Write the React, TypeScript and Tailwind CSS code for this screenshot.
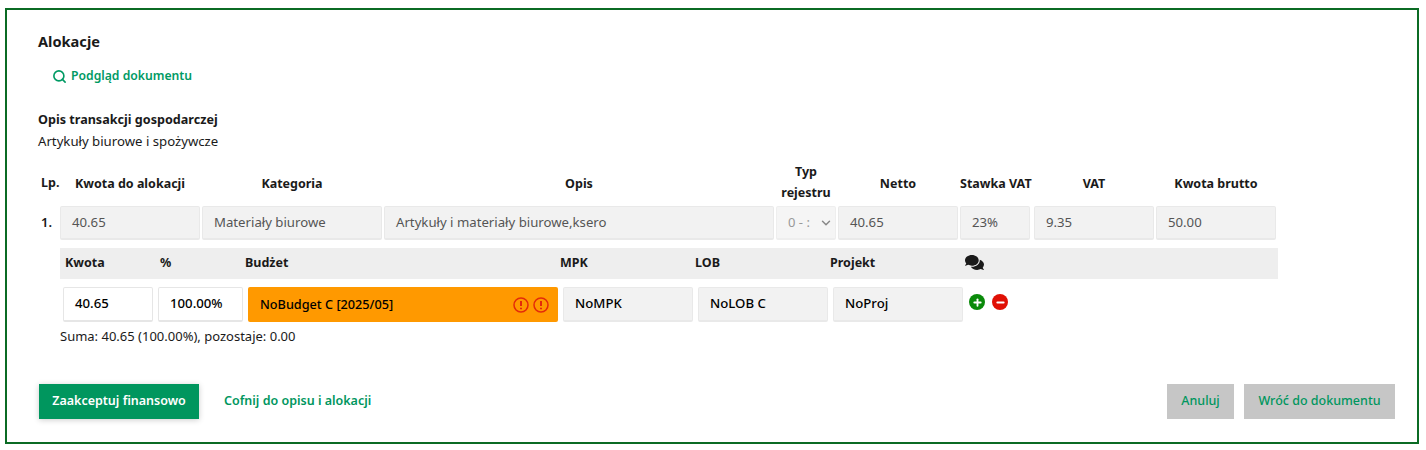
import { Search, ChevronDown, Plus, Minus } from 'lucide-react'
import { FaComments } from 'react-icons/fa'

const FONT = "font-['Noto_Sans',sans-serif]"

const headers = [
  { label: 'Kwota do alokacji', width: 'w-[140px] whitespace-nowrap' },
  { label: 'Kategoria', width: 'w-[180px]' },
  { label: 'Opis', width: 'w-[390px]' },
  { label: 'Typ rejestru', width: 'w-[60px] mb-[2px]' },
  { label: 'Netto', width: 'w-[120px]' },
  { label: 'Stawka VAT', width: 'w-[70px] whitespace-nowrap' },
  { label: 'VAT', width: 'w-[120px] ml-[2px]' },
  { label: 'Kwota brutto', width: 'w-[120px] whitespace-nowrap' },
]

function Field({ value, width, dark }: { value: string; width: string; dark?: boolean }) {
  return (
    <div
      className={`${width} h-[34px] shrink-0 flex items-center pl-[11px] bg-[#f2f2f2] border border-[#e9e9e9] border-b-2 rounded-[2px] text-[13.2px] ${
        dark ? 'text-black font-medium h-[35px]' : 'text-[#555555]'
      }`}
    >
      {value}
    </div>
  )
}

export default function App() {
  return (
    <div className={`${FONT} pt-2 pl-[5px] bg-white h-[450px] w-[1426px]`}>
      <div className="w-[1414px] h-[436px] border-2 border-[#0b6b24] pl-[31px] pr-[22px] text-[#1a1a1a] flex flex-col">
        {/* Title */}
        <h2 className="mt-[21px] h-5 leading-5 text-[14.6px] font-bold">Alokacje</h2>

        <a className="mt-[15px] ml-[14px] h-5 flex items-center gap-[4px] text-[12.2px] font-semibold text-[#009a64]">
          <Search size={15} strokeWidth={2.6} />
          Podgląd dokumentu
        </a>

        <div className="mt-[23px] h-[21px] leading-[22px] text-[12.6px] font-bold">Opis transakcji gospodarczej</div>
        <div className="h-[22px] leading-[22px] text-[13.2px]">Artykuły biurowe i spożywcze</div>

        {/* Main row headers */}
        <div className="mt-[9px] flex items-center h-[44px] text-[12.5px] font-bold">
          <div className="w-[22px] pl-[3px]">Lp.</div>
          <div className="flex gap-[2px] items-center">
            {headers.map((h) => (
              <div key={h.label} className={`${h.width} text-center leading-[21px] shrink-0`}>
                {h.label}
              </div>
            ))}
          </div>
        </div>

        {/* Main row */}
        <div className="mt-[1px] flex items-center">
          <div className="w-[22px] pl-[3px] text-[13px] font-semibold">1.</div>
          <div className="flex gap-[2px]">
            <Field value="40.65" width="w-[140px]" />
            <Field value="Materiały biurowe" width="w-[180px]" />
            <Field value="Artykuły i materiały biurowe,ksero" width="w-[390px]" />
            <div className="w-[60px] h-[34px] flex items-center justify-between pl-[11px] pr-[2px] bg-[#f5f5f5] border border-[#eeeeee] border-b-2 rounded-[2px] text-[13px] text-[#999999]">
              <span>0 - :</span>
              <ChevronDown size={14} strokeWidth={2.5} className="text-[#888888]" />
            </div>
            <Field value="40.65" width="w-[120px]" />
            <Field value="23%" width="w-[70px]" />
            <Field value="9.35" width="w-[120px] ml-[2px]" />
            <Field value="50.00" width="w-[120px]" />
          </div>
        </div>

        {/* Allocation headers */}
        <div className="mt-[8px] ml-[22px] w-[1218px] h-[31px] bg-[#eeeeee] flex items-center text-[12.5px] font-bold">
          <div className="w-[100px] pl-[5px]">Kwota</div>
          <div className="w-[85px]">%</div>
          <div className="w-[315px]">Budżet</div>
          <div className="w-[135px]">MPK</div>
          <div className="w-[135px]">LOB</div>
          <div className="w-[135px]">Projekt</div>
          <FaComments size={19} className="mb-[2px]" />
        </div>

        {/* Allocation row */}
        <div className="mt-[8px] ml-[25px] flex gap-[5px] items-start">
          <div className="w-[90px] h-[35px] flex items-center pl-[11px] bg-white border border-[#e6e6e6] border-b-2 rounded-[2px] text-[13.2px] font-medium text-black">
            40.65
          </div>
          <div className="w-[85px] h-[35px] flex items-center pl-[11px] bg-white border border-[#e6e6e6] border-b-2 rounded-[2px] text-[13.2px] font-medium text-black">
            100.00%
          </div>
          <div className="w-[310px] h-[35px] flex items-center justify-between pl-[12px] pr-[9px] bg-[#ff9900] rounded-[2px] text-[12.7px] font-medium text-black">
            <span>NoBudget C [2025/05]</span>
            <span className="flex gap-[4px]">
              <Warning />
              <Warning />
            </span>
          </div>
          <Field value="NoMPK" width="w-[130px]" dark />
          <Field value="NoLOB C" width="w-[130px]" dark />
          <Field value="NoProj" width="w-[130px]" dark />
          <div className="flex gap-[7px] pt-[7px] pl-[1px]">
            <span className="w-4 h-4 rounded-full bg-[#0a8a0a] flex items-center justify-center text-white">
              <Plus size={11} strokeWidth={4} />
            </span>
            <span className="w-4 h-4 rounded-full bg-[#e01005] flex items-center justify-center text-white">
              <Minus size={11} strokeWidth={4} />
            </span>
          </div>
        </div>

        <div className="mt-[4px] ml-[22px] h-5 leading-5 text-[13px]">Suma: 40.65 (100.00%), pozostaje: 0.00</div>

        {/* Actions */}
        <div className="mt-[38px] ml-[1px] flex items-center text-[12.5px] font-medium">
          <button className="w-[160px] h-[35px] bg-[#00965e] text-white font-semibold shadow-[0_1px_6px_rgba(0,0,0,0.2)]">
            Zaakceptuj finansowo
          </button>
          <a className="ml-[25px] text-[#00965e] font-semibold">Cofnij do opisu i alokacji</a>
          <button className="ml-auto w-[67px] h-[35px] bg-[#c6c6c6] text-[#00965e]">Anuluj</button>
          <button className="ml-[10px] w-[151px] h-[35px] bg-[#c6c6c6] text-[#00965e]">Wróć do dokumentu</button>
        </div>
      </div>
    </div>
  )
}

function Warning() {
  return (
    <svg width="16" height="16" viewBox="0 0 16 16" fill="none" stroke="#e32a0a" strokeWidth="1.5">
      <circle cx="8" cy="8" r="7" />
      <path d="M8 4v5M8 10.7v1.5" strokeWidth="2" />
    </svg>
  )
}
